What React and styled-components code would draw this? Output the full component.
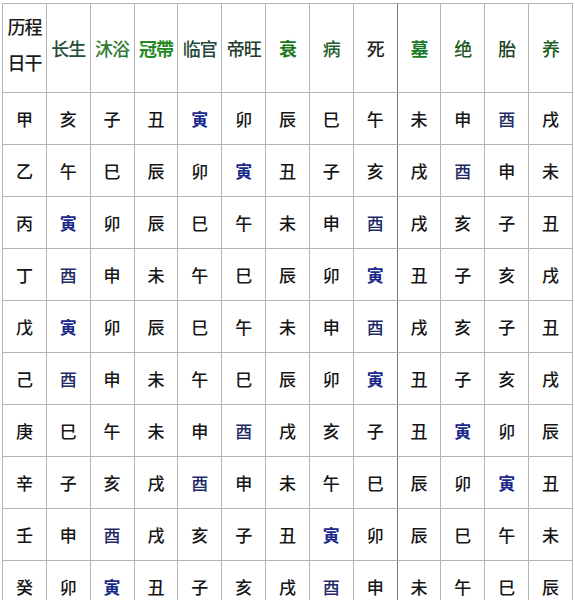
import React from "react";
import styled, { createGlobalStyle } from "styled-components";

const GlobalStyle = createGlobalStyle`
  html, body {
    margin: 0;
    padding: 0;
    background: #ffffff;
    overflow: hidden;
  }
  body {
    font-family: "Noto Sans CJK SC", "Noto Sans", sans-serif;
  }
`;

const Page = styled.div`
  width: 575px;
  height: 600px;
  overflow: hidden;
  padding: 3px 0 0 2px;
  box-sizing: border-box;
`;

const Table = styled.table`
  border-collapse: collapse;
  table-layout: fixed;
  width: 571px;
  border: 1px solid #8a8a8a;
`;

const HeadCell = styled.th`
  height: 88px;
  padding: 0;
  border: 1px solid #b4b4b4;
  border-right-color: ${({ strong }) => (strong ? "#7a7a7a" : "#b4b4b4")};
  font-weight: ${({ bold }) => (bold ? 600 : 500)};
  font-size: 18px;
  color: ${({ tone }) => tone || "#222"};
  text-align: center;
  vertical-align: middle;
  letter-spacing: -1px;
  white-space: nowrap;
`;

const Corner = styled.div`
  padding-bottom: 8px;
`;

const CornerLine = styled.div`
  font-size: 18px;
  line-height: 36px;
  color: #1a1a1a;
  font-weight: 500;
`;

const Cell = styled.td`
  height: 51px;
  padding: 0;
  border: 1px solid #b4b4b4;
  border-right-color: ${({ strong }) => (strong ? "#7a7a7a" : "#b4b4b4")};
  font-size: 17px;
  text-align: center;
  vertical-align: middle;
  color: ${({ tone }) => tone || "#151515"};
  font-weight: ${({ bold }) => (bold ? 700 : 500)};
`;

const stages = [
  { name: "长生", tone: "#24503a" },
  { name: "沐浴", tone: "#2f7a2f" },
  { name: "冠帶", tone: "#238a23", bold: true },
  { name: "临官", tone: "#244a3c" },
  { name: "帝旺", tone: "#1f3d2d" },
  { name: "衰", tone: "#1a7a1a", bold: true },
  { name: "病", tone: "#225e2c" },
  { name: "死", tone: "#222222", strong: true },
  { name: "墓", tone: "#1b7a28", bold: true },
  { name: "绝", tone: "#1d5a1d" },
  { name: "胎", tone: "#234423" },
  { name: "养", tone: "#1c5e1c" }
];

const rows = [
  ["甲", "亥子丑寅卯辰巳午未申酉戌"],
  ["乙", "午巳辰卯寅丑子亥戌酉申未"],
  ["丙", "寅卯辰巳午未申酉戌亥子丑"],
  ["丁", "酉申未午巳辰卯寅丑子亥戌"],
  ["戊", "寅卯辰巳午未申酉戌亥子丑"],
  ["己", "酉申未午巳辰卯寅丑子亥戌"],
  ["庚", "巳午未申酉戌亥子丑寅卯辰"],
  ["辛", "子亥戌酉申未午巳辰卯寅丑"],
  ["壬", "申酉戌亥子丑寅卯辰巳午未"],
  ["癸", "卯寅丑子亥戌酉申未午巳辰"]
];

const toneFor = ch => {
  if (ch === "寅") return "#1a2a8c";
  if (ch === "酉") return "#1f2a66";
  return undefined;
};

export default function App() {
  return (
    <Page>
      <GlobalStyle />
      <Table>
        <thead>
          <tr>
            <HeadCell>
              <Corner>
                <CornerLine>历程</CornerLine>
                <CornerLine>日干</CornerLine>
              </Corner>
            </HeadCell>
            {stages.map(s => (
              <HeadCell
                key={s.name}
                tone={s.tone}
                bold={s.bold}
                strong={s.strong}
              >
                {s.name}
              </HeadCell>
            ))}
          </tr>
        </thead>
        <tbody>
          {rows.map(([stem, branches]) => (
            <tr key={stem}>
              <Cell>{stem}</Cell>
              {[...branches].map((ch, i) => (
                <Cell
                  key={i}
                  tone={toneFor(ch)}
                  bold={ch === "寅"}
                  strong={stages[i].strong}
                >
                  {ch}
                </Cell>
              ))}
            </tr>
          ))}
        </tbody>
      </Table>
    </Page>
  );
}
